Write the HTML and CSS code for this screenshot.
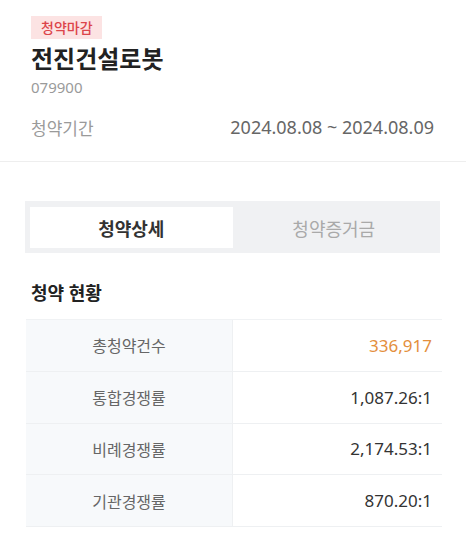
FILE: index.html
```html
<!DOCTYPE html>
<html lang="ko">
<head>
<meta charset="utf-8">
<link rel="stylesheet" href="styles.css">
</head>
<body>
<div class="page">
  <header class="head">
    <span class="badge">청약마감</span>
    <h1 class="title">전진건설로봇</h1>
    <div class="code">079900</div>
    <div class="period">
      <span class="period-label">청약기간</span>
      <span class="period-value">2024.08.08 ~ 2024.08.09</span>
    </div>
  </header>
  <div class="tabs">
    <div class="tab active">청약상세</div>
    <div class="tab">청약증거금</div>
  </div>
  <h2 class="section-title">청약 현황</h2>
  <div class="table">
    <div class="row"><div class="th">총청약건수</div><div class="td orange">336,917</div></div>
    <div class="row"><div class="th">통합경쟁률</div><div class="td">1,087.26:1</div></div>
    <div class="row"><div class="th">비례경쟁률</div><div class="td">2,174.53:1</div></div>
    <div class="row"><div class="th">기관경쟁률</div><div class="td">870.20:1</div></div>
  </div>
</div>
</body>
</html>
```

FILE: styles.css
```css
* { box-sizing: border-box; }
html, body { margin: 0; padding: 0; background: #fff; }
body {
  font-family: "Noto Sans", "Noto Sans CJK KR", sans-serif;
  width: 466px;
  height: 536px;
  overflow: hidden;
}
.page { display: flex; flex-direction: column; }
.head {
  display: flex;
  flex-direction: column;
  align-items: flex-start;
  padding: 16px 32px 21px 31px;
  border-bottom: 1px solid #eeeeee;
}
.badge {
  display: inline-block;
  height: 23px;
  line-height: 23px;
  padding: 0 9px 0 10px;
  font-size: 14px;
  font-weight: 500;
  color: #dc454b;
  background: #fce3e3;
}
.title {
  margin: 3px 0 0;
  font-size: 24px;
  line-height: 34px;
  font-weight: 700;
  color: #222;
}
.code {
  font-size: 15px;
  line-height: 22px;
  color: #9a9a9a;
}
.period {
  align-self: stretch;
  display: flex;
  justify-content: space-between;
  align-items: center;
  margin-top: 16px;
  height: 26px;
}
.period-label { font-size: 17px; color: #9a9a9a; }
.period-value { font-size: 18px; color: #666; }
.tabs {
  display: flex;
  margin: 39px 26px 0 25px;
  height: 52px;
  padding: 6px 5px 5px;
  background: #f0f1f3;
}
.tab {
  flex: 1;
  display: flex;
  align-items: center;
  justify-content: center;
  font-size: 18px;
  color: #a9a9a9;
}
.tab.active {
  background: #fff;
  color: #333;
  font-weight: 700;
}
.section-title {
  margin: 27px 0 0 31px;
  font-size: 18px;
  line-height: 26px;
  font-weight: 700;
  color: #222;
}
.table {
  margin: 13px 24px 0 26px;
  border-top: 1px solid #f0f2f4;
}
.row {
  display: flex;
  height: 51.75px;
  border-bottom: 1px solid #eef0f2;
}
.th {
  width: 207px;
  display: flex;
  align-items: center;
  justify-content: center;
  background: #f7f9fb;
  border-right: 1px solid #eef0f2;
  font-size: 16px;
  color: #666;
}
.td {
  flex: 1;
  display: flex;
  align-items: center;
  justify-content: flex-end;
  padding-right: 10px;
  font-size: 17px;
  color: #333;
}
.td.orange { color: #e48f3c; }
```
